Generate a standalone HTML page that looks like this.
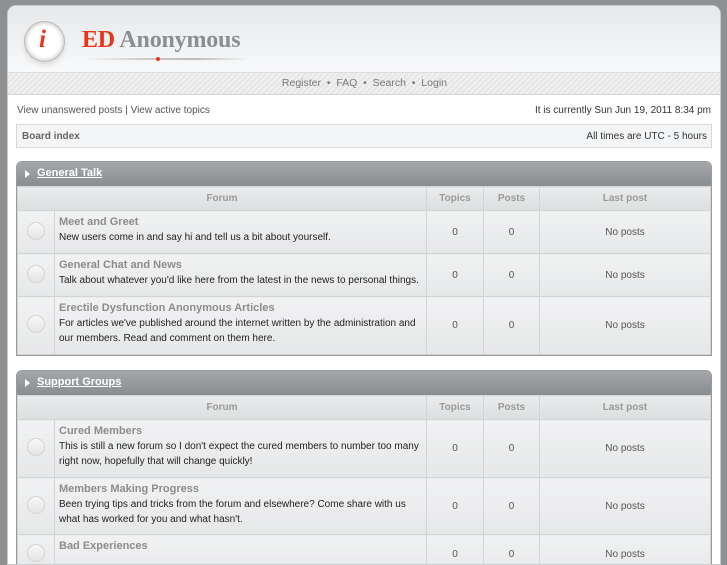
<!DOCTYPE html><html><head><style>
*{margin:0;padding:0;box-sizing:border-box}
body{width:727px;height:545px;overflow:hidden;background:#8e9092;font-family:"Liberation Sans",sans-serif;font-size:10px;color:#333;position:relative}
#page{position:absolute;left:7px;top:5px;width:714px;height:560px;background:#fff;border-radius:9px 9px 0 0;border:1px solid #c8cacc;overflow:hidden}
#hdr{height:67px;background:linear-gradient(#e6e8ea,#f8f9fa);position:relative;border-bottom:1px solid #ddd}
#nav{height:22px;background:repeating-linear-gradient(135deg,#f0f0f0 0 2px,#e6e6e6 2px 4px);border-bottom:1px solid #d4d4d4;text-align:right;padding:4px 273px 0 0;color:#777;font-size:10.5px}
.logo{position:absolute;left:16px;top:15px;width:41px;height:41px;border-radius:50%;background:radial-gradient(#fff 55%,#ddd 70%,#c4c4c4);border:1px solid #bbb;box-shadow:0 3px 5px #ddd}
.logo span{position:absolute;left:14px;top:4px;font:italic bold 25px "Liberation Serif",serif;color:#e8351a}
.title{position:absolute;left:74px;top:21px;font:bold 24px "Liberation Serif",serif;color:#8b8f93;letter-spacing:-0.2px}
.title b{color:#e8351a}
.uline{position:absolute;left:80px;top:52px;width:160px;height:2px;background:linear-gradient(90deg,transparent,#ccc,#bbb,transparent)}
.dot{position:absolute;left:148px;top:51px;width:4px;height:4px;border-radius:50%;background:#e8351a}
.t{position:absolute;font-size:10px;color:#555}
.bar{position:absolute;left:8px;top:118px;width:696px;height:24px;border:1px solid #d8d8d8;background:#f4f5f6}
.cat{position:absolute;left:8px;width:696px;border:1px solid #999;border-radius:6px 6px 0 0;overflow:hidden;background:#fff}
.ch{height:24px;background:linear-gradient(#a4a7aa,#8a8d90);color:#fff;font-weight:bold;font-size:11px;padding:5px 0 0 20px;position:relative}
.ch u{color:#fff}
.ch:before{content:"";position:absolute;left:8px;top:8px;border-left:5px solid #fff;border-top:4px solid transparent;border-bottom:4px solid transparent}
table{border-collapse:collapse;width:100%}
td,th{border:1px solid #d2d4d6;font-size:10px}
th{height:24px;background:linear-gradient(#eaebec,#dcdedf);color:#999;font-weight:bold}
td{background:linear-gradient(#f1f2f3,#e6e7e8);text-align:center;color:#555}
td.f{text-align:left;padding:4px 4px 0 4px;vertical-align:top;color:#222;line-height:15px}
td.f b{color:#8c8c8c;font-size:11px}
td.i span{display:inline-block;width:18px;height:18px;border-radius:50%;border:1px solid #d4d4d4;background:linear-gradient(#f8f8f8,#e4e4e4)}
</style></head><body>
<div id="page">
<div id="hdr"><div class="logo"><span>i</span></div><div class="title"><b>ED</b> Anonymous</div><div class="uline"></div><div class="dot"></div></div>
<div id="nav">Register &nbsp;•&nbsp; FAQ &nbsp;•&nbsp; Search &nbsp;•&nbsp; Login</div>
<div class="t" style="left:9px;top:99px">View unanswered posts | View active topics</div>
<div class="t" style="right:9px;top:99px;color:#333">It is currently Sun Jun 19, 2011 8:34 pm</div>
<div class="bar"><span class="t" style="left:5px;top:6px;font-weight:bold;color:#666">Board index</span><span class="t" style="right:4px;top:6px;color:#333">All times are UTC - 5 hours</span></div>
<div class="cat" style="top:155px"><div class="ch"><u>General Talk</u></div>
<table><tr><th colspan="2">Forum</th><th style="width:57px">Topics</th><th style="width:56px">Posts</th><th style="width:171px">Last post</th></tr>
<tr style="height:43px"><td class="i" style="width:37px"><span></span></td><td class="f"><b>Meet and Greet</b><br>New users come in and say hi and tell us a bit about yourself.</td><td>0</td><td>0</td><td>No posts</td></tr>
<tr style="height:43px"><td class="i"><span></span></td><td class="f"><b>General Chat and News</b><br>Talk about whatever you'd like here from the latest in the news to personal things.</td><td>0</td><td>0</td><td>No posts</td></tr>
<tr style="height:58px"><td class="i"><span></span></td><td class="f"><b>Erectile Dysfunction Anonymous Articles</b><br>For articles we've published around the internet written by the administration and our members. Read and comment on them here.</td><td>0</td><td>0</td><td>No posts</td></tr>
</table></div>
<div class="cat" style="top:364px"><div class="ch"><u>Support Groups</u></div>
<table><tr><th colspan="2">Forum</th><th style="width:57px">Topics</th><th style="width:56px">Posts</th><th style="width:171px">Last post</th></tr>
<tr style="height:58px"><td class="i" style="width:37px"><span></span></td><td class="f"><b>Cured Members</b><br>This is still a new forum so I don't expect the cured members to number too many right now, hopefully that will change quickly!</td><td>0</td><td>0</td><td>No posts</td></tr>
<tr style="height:57px"><td class="i"><span></span></td><td class="f"><b>Members Making Progress</b><br>Been trying tips and tricks from the forum and elsewhere? Come share with us what has worked for you and what hasn't.</td><td>0</td><td>0</td><td>No posts</td></tr>
<tr style="height:40px"><td class="i"><span></span></td><td class="f"><b>Bad Experiences</b><br>&nbsp;</td><td>0</td><td>0</td><td>No posts</td></tr>
</table></div>
</div>
</body></html>
